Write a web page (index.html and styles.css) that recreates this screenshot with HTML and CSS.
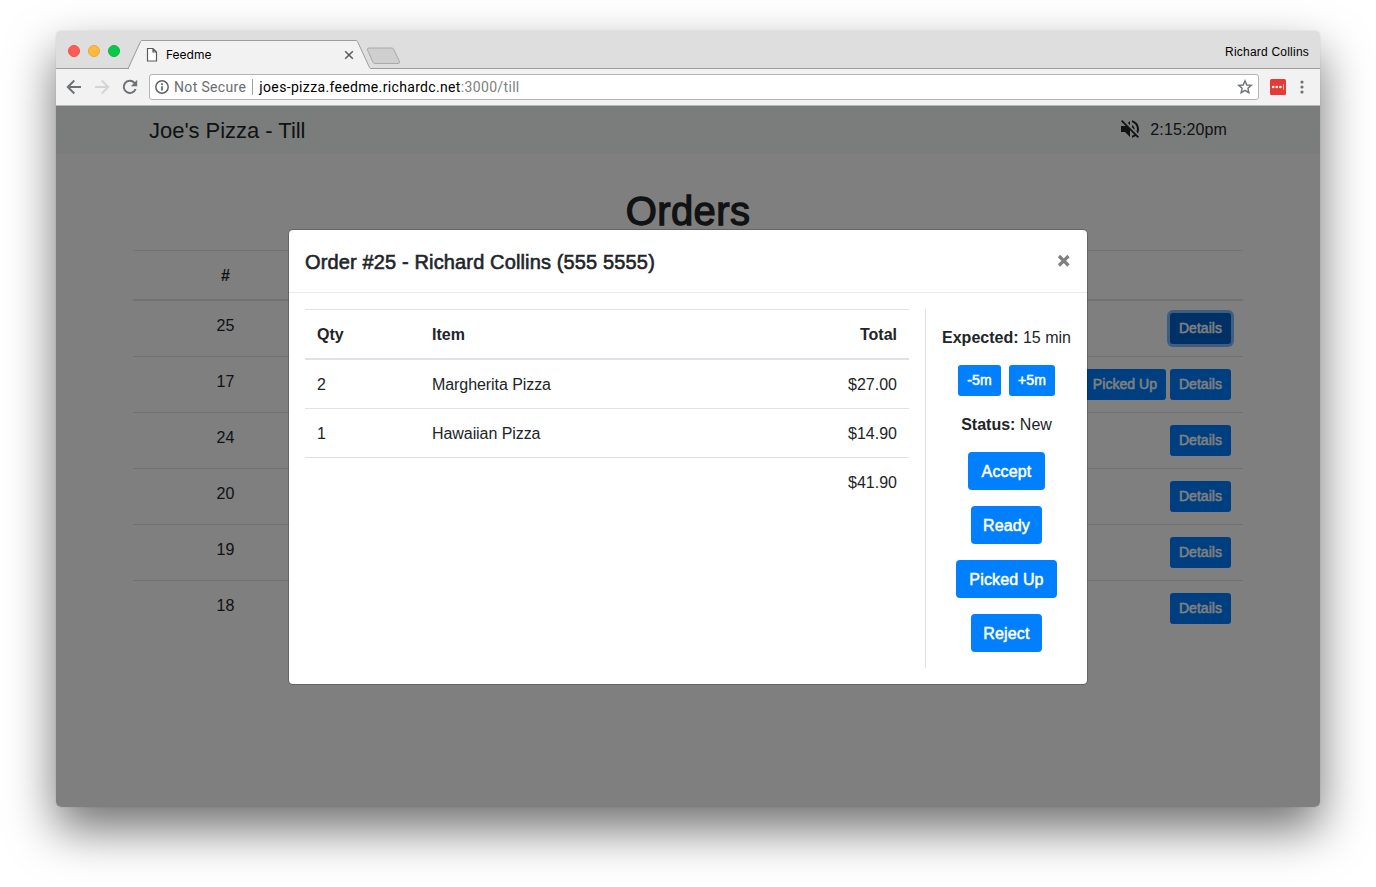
FILE: index.html
```html
<!DOCTYPE html>
<html lang="en">
<head>
<meta charset="utf-8">
<title>Feedme</title>
<link rel="stylesheet" href="styles.css">
</head>
<body>
<div class="window">
  <div class="tabstrip">
    <div class="lights"><i class="red"></i><i class="amber"></i><i class="green"></i></div>
    <div class="tab">
      <svg class="tab-shape" width="244" height="30" viewBox="0 0 244 30"><path d="M0 28.500 L12 1.500 Q12.500 .5 13.500 .5 H227 Q228 .5 228.500 1.500 L241 28 H244 V30 H0Z" fill="#f2f2f2"/><path d="M-2 28.500 Q-1 28.500 -.5 27.500 L11.500 1.500 Q12 .5 13 .5 H227 Q228 .5 228.500 1.500 L240.500 27.500 Q241 28.500 242 28.500 H244" fill="none" stroke="#9c9c9c"/></svg>
      <div class="tab-row">
        <svg width="12" height="16" viewBox="0 0 12 16"><path d="M1.500 1.500 H7 L10.500 5 V14 H1.500Z M7 1.500 V5 H10.500" fill="#fff" stroke="#5a5a5a" stroke-width="1.200"/></svg>
        <span class="tab-title">Feedme</span>
        <svg width="10" height="10" viewBox="0 0 10 10"><path d="M1.200 1.200 L8.800 8.800 M8.800 1.200 L1.200 8.800" stroke="#5a5a5a" stroke-width="1.500"/></svg>
      </div>
    </div>
    <svg class="newtab" width="36" height="18" viewBox="0 0 36 18"><path d="M3 1 H25.500 Q27 1 27.700 2.300 L33.500 14.500 Q34 16.500 32 16.500 H9 Q7.500 16.500 6.800 15 L1.500 3 Q1 1 3 1Z" fill="#cfcfcf" stroke="#a9a9a9"/></svg>
    <span class="profile">Richard Collins</span>
  </div>
  <div class="toolbar">
    <svg width="16" height="16" viewBox="0 0 16 16"><path d="M15 8 H2 M8.300 1.500 L1.800 8 L8.300 14.500" fill="none" stroke="#6e7276" stroke-width="2"/></svg>
    <svg width="16" height="16" viewBox="0 0 16 16"><path d="M1 8 H14 M7.700 1.500 L14.200 8 L7.700 14.500" fill="none" stroke="#d3d4d5" stroke-width="2"/></svg>
    <svg width="16" height="16" viewBox="0 0 16 16"><path d="M13.600 10 A6.100 6.100 0 1 1 12.300 3.700 L13.300 4.700" fill="none" stroke="#6e7276" stroke-width="2"/><path d="M15.200 .8 V7.200 H8.800Z" fill="#6e7276"/></svg>
    <div class="omnibox">
      <svg width="14" height="14" viewBox="0 0 14 14"><circle cx="7" cy="7" r="6.200" fill="none" stroke="#5f6368" stroke-width="1.500"/><path d="M7 6.200 V10.500 M7 3.300 V5" stroke="#5f6368" stroke-width="1.700"/></svg>
      <span class="secure">Not Secure</span>
      <i class="sep"></i>
      <span class="url">joes-pizza.feedme.richardc.net<span class="path">:3000/till</span></span>
      <svg class="star" width="16" height="16" viewBox="0 0 16 16"><path d="M8 1.800 L9.800 6 L14.300 6.400 L10.900 9.300 L11.900 13.700 L8 11.400 L4.100 13.700 L5.100 9.300 L1.700 6.400 L6.200 6Z" fill="none" stroke="#6e7276" stroke-width="1.400"/></svg>
    </div>
    <svg class="ext" width="16" height="16" viewBox="0 0 16 16"><rect width="16" height="16" rx="1.500" fill="#e53a35"/><circle cx="3.200" cy="8" r="1.300" fill="#fff"/><circle cx="6.800" cy="8" r="1.300" fill="#fff"/><circle cx="10.400" cy="8" r="1.300" fill="#fff"/><path d="M13.500 5.200V10.800" stroke="#f5b5b3"/></svg>
    <svg class="kebab" width="4" height="14" viewBox="0 0 4 14"><g fill="#6e7276"><circle cx="2" cy="2" r="1.600"/><circle cx="2" cy="7" r="1.600"/><circle cx="2" cy="12" r="1.600"/></g></svg>
  </div>
  <div class="page">
    <nav class="navbar">
      <div class="navbar-inner">
        <span class="brand">Joe's Pizza - Till</span>
        <div class="clock">
          <svg width="20" height="20" viewBox="2 2 20 20"><path fill="#212529" d="M4.270 3L3 4.270 7.730 9H3v6h4l5 5v-6.730l4.250 4.250c-.67.520-1.420.930-2.250 1.180v2.060c1.380-.31 2.630-.95 3.690-1.810L19.730 21 21 19.730l-9-9L4.270 3zM19 12c0 .94-.2 1.820-.54 2.640l1.510 1.510C20.630 14.910 21 13.500 21 12c0-4.280-2.990-7.860-7-8.770v2.060c2.890.86 5 3.540 5 6.710zm-2.500 0c0-1.770-1.020-3.290-2.500-4.030v2.210l2.450 2.450c.03-.2.050-.41.050-.63zM12 4L9.910 6.090 12 8.180V4z"/></svg>
          <span class="time">2:15:20pm</span>
        </div>
      </div>
    </nav>
    <main class="container">
      <h1 class="heading">Orders</h1>
      <table class="table orders">
        <thead><tr><th class="num">#</th><th></th></tr></thead>
        <tbody>
          <tr><td class="num">25</td><td class="tools"><div class="actions"><span class="btn sm focused details">Details</span></div></td></tr>
          <tr><td class="num">17</td><td class="tools"><div class="actions"><span class="btn sm pick">Picked Up</span><span class="btn sm details">Details</span></div></td></tr>
          <tr><td class="num">24</td><td class="tools"><div class="actions"><span class="btn sm details">Details</span></div></td></tr>
          <tr><td class="num">20</td><td class="tools"><div class="actions"><span class="btn sm details">Details</span></div></td></tr>
          <tr><td class="num">19</td><td class="tools"><div class="actions"><span class="btn sm details">Details</span></div></td></tr>
          <tr><td class="num">18</td><td class="tools"><div class="actions"><span class="btn sm details">Details</span></div></td></tr>
        </tbody>
      </table>
    </main>
    <div class="backdrop">
      <section class="modal">
        <header class="modal-header">
          <h5 class="modal-title">Order #25 - Richard Collins (555 5555)</h5>
          <svg width="14" height="14" viewBox="0 0 14 14"><path d="M2 2 L11.500 11.500 M11.500 2 L2 11.500" stroke="#808080" stroke-width="3.200"/></svg>
        </header>
        <div class="modal-body">
          <div class="items">
            <table class="table">
              <thead><tr><th class="qty">Qty</th><th>Item</th><th class="total">Total</th></tr></thead>
              <tbody>
                <tr><td>2</td><td class="name">Margherita Pizza</td><td class="total">$27.00</td></tr>
                <tr><td>1</td><td class="name">Hawaiian Pizza</td><td class="total">$14.90</td></tr>
                <tr><td></td><td></td><td class="total">$41.90</td></tr>
              </tbody>
            </table>
          </div>
          <aside class="side">
            <div class="line"><b>Expected:</b> 15 min</div>
            <div class="pair"><span class="btn sm minus">-5m</span><span class="btn sm plus">+5m</span></div>
            <div class="line"><b>Status:</b> New</div>
            <span class="btn accept">Accept</span>
            <span class="btn short">Ready</span>
            <span class="btn wide">Picked Up</span>
            <span class="btn short">Reject</span>
          </aside>
        </div>
      </section>
    </div>
  </div>
</div>
</body>
</html>
```
FILE: styles.css
```css
* { box-sizing: border-box; }
body {
  margin: 0;
  padding: 31px 56px 0;
  height: 887px;
  overflow: hidden;
  background: #fff;
  color: #212529;
  font: 16px/24px "Liberation Sans", Arial, sans-serif;
}
svg { display: block; flex: none; }
.window {
  width: 1264px;
  height: 776px;
  display: flex;
  flex-direction: column;
  border-radius: 5px;
  overflow: hidden;
  box-shadow: 0 0 1px rgba(0,0,0,.3), 0 22px 48px rgba(0,0,0,.56);
}

/* Browser chrome */
.tabstrip {
  flex: none;
  height: 38px;
  display: flex;
  background: #dedede;
  border-bottom: 1px solid #9c9c9c;
}
.lights { display: flex; gap: 8px; padding: 14px 0 0 12px; width: 73px; }
.lights i { width: 12px; height: 12px; border-radius: 50%; border-width: 1px; border-style: solid; }
.red { background: #ff5b57; border-color: #e9504b; }
.amber { background: #ffbb3e; border-color: #eaa835; }
.green { background: #07c94c; border-color: #09b53f; }
.tab { display: grid; width: 244px; height: 30px; margin: 9px 0 -2px; flex: none; }
.tab-shape, .tab-row { grid-area: 1 / 1; }
.tab-shape { overflow: visible; }
.tab-row { display: flex; align-items: center; padding: 0 19px 0 17px; z-index: 1; }
.tab-title { flex: 1; margin-left: 8px; color: #000; font: 12px/16px Inter, Roboto, sans-serif; }
.newtab { margin: 16px 0 0 -7px; }
.profile { margin: 13px 11px 0 auto; font-size: 12px; line-height: 16px; color: #000; letter-spacing: .22px; }
.toolbar {
  flex: none;
  height: 37px;
  display: flex;
  align-items: center;
  gap: 12px;
  padding: 0 16px 0 10px;
  background: #f2f2f2;
  border-bottom: 1px solid #b6b6b6;
}
.omnibox {
  flex: 1;
  display: flex;
  align-items: center;
  height: 26px;
  margin-left: -1px;
  padding: 0 5px;
  border: 1px solid #b4b4b4;
  border-radius: 3px;
  background: #fff;
  font: 14px/20px Roboto, sans-serif;
}
.secure { margin-left: 5px; color: #6a6d70; letter-spacing: .35px; }
.sep { width: 1px; height: 16px; margin: 0 6px; background: #a0a0a0; }
.url { color: #000; letter-spacing: .34px; }
.path { color: #808080; }
.star { margin-left: auto; }
.ext { margin-left: -1px; }
.kebab { margin-left: 2px; }

/* Till page */
.page { position: relative; flex: 1; background: #fff; }
.navbar { height: 48px; background: #f6faf8; }
.navbar-inner {
  width: 1110px;
  height: 48px;
  margin: 0 auto;
  padding: 0 16px;
  display: flex;
  justify-content: space-between;
  align-items: center;
}
.brand { font-size: 22px; padding-top: 2px; letter-spacing: -.03px; }
.clock { display: flex; align-items: center; gap: 10px; padding-bottom: 2px; }
.time { padding-top: 2px; letter-spacing: .12px; }
.container { width: 1110px; margin: 0 auto; padding-top: 33px; }
.heading {
  margin: 0 0 15px;
  text-align: center;
  font-size: 40px;
  font-weight: 400;
  line-height: 48px;
  letter-spacing: .4px;
  -webkit-text-stroke: 1.3px #212529;
}
.table { width: 100%; border-spacing: 0; table-layout: fixed; }
.table th, .table td { padding: 13px 12px 11px; text-align: left; vertical-align: top; border-top: 1px solid #dee2e6; }
.table .tools { padding: 12px; }
.table th { height: 51px; border-bottom: 2px solid #dee2e6; }
.table tbody tr:first-child td { border-top: 0; }
.table .num { width: 185px; text-align: center; }
.table .name { letter-spacing: -.07px; }
.actions { display: flex; justify-content: flex-end; gap: 4px; }

.btn {
  display: block;
  height: 38px;
  line-height: 40px;
  text-align: center;
  white-space: nowrap;
  color: #fff;
  background: #007fff;
  border-radius: 4px;
  letter-spacing: .15px;
  -webkit-text-stroke: .5px #fff;
}
.btn.sm { height: 31px; line-height: 30px; font-size: 14px; border-radius: 3px; letter-spacing: .05px; }
.btn.focused { background: #0062cc; box-shadow: 0 0 0 3px rgba(0,123,255,.5); }
.details { width: 61px; }
.pick { width: 82px; }
.minus { width: 43px; }
.plus { width: 46px; }
.accept { width: 77px; }
.short { width: 71px; }
.wide { width: 101px; }

/* Order dialog */
.backdrop {
  position: absolute;
  inset: 0;
  display: flex;
  justify-content: center;
  align-items: flex-start;
  padding-top: 123px;
  background: rgba(0,0,0,.5);
}
.modal {
  width: 800px;
  background: #fff;
  background-clip: padding-box;
  border: 1px solid rgba(0,0,0,.2);
  border-radius: 5px;
}
.modal-header {
  display: flex;
  justify-content: space-between;
  align-items: center;
  height: 63px;
  padding: 0 16px;
  border-bottom: 1px solid #e9ecef;
}
.modal-title { margin: 0; padding-top: 2px; font-size: 20px; font-weight: 400; line-height: 30px; letter-spacing: .14px; -webkit-text-stroke: .6px #212529; }
.modal-body { display: flex; padding: 16px; gap: 16px; }
.items { width: 604px; }
.table .qty { width: 115px; }
.table .total { text-align: right; }
.side {
  flex: 1;
  display: flex;
  flex-direction: column;
  align-items: center;
  gap: 16px;
  padding: 16px 0 16px 16px;
  border-left: 1px solid #dee2e6;
}
.line { white-space: nowrap; line-height: 26px; margin-bottom: -2px; }
.pair { display: flex; gap: 8px; }
```
